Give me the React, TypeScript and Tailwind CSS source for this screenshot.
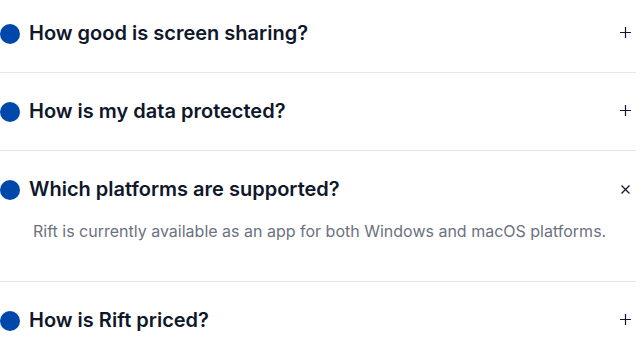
import React, { useState } from 'react';

interface Faq {
  question: string;
  answer: string;
}

const faqs: Faq[] = [
  { question: 'How good is screen sharing?', answer: 'Rift streams your screen in crisp, low-latency quality.' },
  { question: 'How is my data protected?', answer: 'All sessions are end-to-end encrypted.' },
  {
    question: 'Which platforms are supported?',
    answer: 'Rift is currently available as an app for both Windows and macOS platforms.',
  },
  { question: 'How is Rift priced?', answer: 'Rift is free for personal use.' },
];

const PlusIcon = () => (
  <svg width="11" height="11" viewBox="0 0 11 11" className="mb-[3px]">
    <path d="M5.5 0v11M0 5.5h11" stroke="#0f172a" strokeWidth="1.2" fill="none" />
  </svg>
);

const CloseIcon = () => (
  <svg width="9" height="9" viewBox="0 0 9 9">
    <path d="M0.5 0.5l8 8M8.5 0.5l-8 8" stroke="#0f172a" strokeWidth="1.2" fill="none" />
  </svg>
);

const App: React.FC = () => {
  const [open, setOpen] = useState<number>(2);

  return (
    <div className="w-[636px] bg-white font-['Inter',sans-serif] -mt-[5px]">
      {faqs.map((faq, index) => {
        const isOpen = open === index;
        return (
          <div
            key={faq.question}
            className={`${index < faqs.length - 1 ? 'border-b border-[#e5e7eb]' : ''} ${isOpen ? 'pb-[38px]' : ''}`}
          >
            <button
              onClick={() => setOpen(isOpen ? -1 : index)}
              className="flex w-full items-center justify-between py-[26px] text-left"
            >
              <div className="flex items-center gap-[9px]">
                <span className="h-[20px] w-[20px] shrink-0 rounded-full bg-[#0047ab]" />
                <span className="text-[20px] font-semibold leading-[25px] text-[#0f172a]">
                  {faq.question}
                </span>
              </div>
              <span className="mr-[5px] flex w-[11px] items-center justify-center">
                {isOpen ? <CloseIcon /> : <PlusIcon />}
              </span>
            </button>
            {isOpen && (
              <p className="-mt-[9px] pl-[33px] text-[16px] leading-[24px] text-[#6b7280]">
                {faq.answer}
              </p>
            )}
          </div>
        );
      })}
    </div>
  );
};

export default App;
